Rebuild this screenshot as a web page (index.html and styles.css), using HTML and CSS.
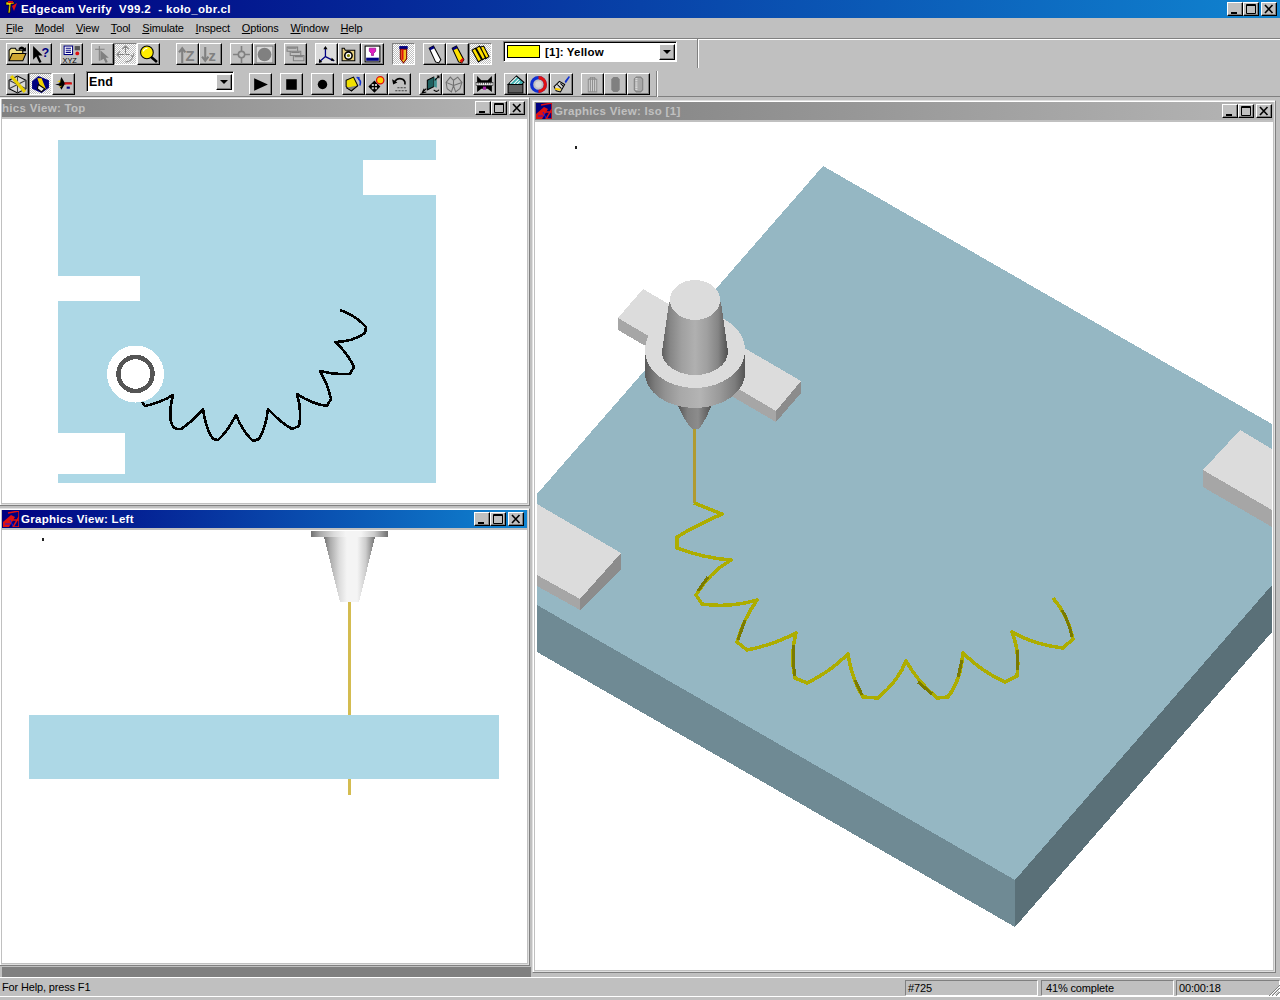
FILE: index.html
```html
<!DOCTYPE html>
<html lang="en">
<head>
<meta charset="utf-8">
<title>Edgecam Verify V99.2 - koło_obr.cl</title>
<link rel="stylesheet" href="styles.css">
</head>
<body>
<svg class="defs" width="0" height="0">
  <defs>
    <symbol id="g-min" viewBox="0 0 16 14"><rect x="4" y="10" width="6" height="2" fill="#000"/></symbol>
    <symbol id="g-max" viewBox="0 0 16 14"><path d="M3.500 2.500h9v9h-9z M3 3.500h10" fill="none" stroke="#000"/></symbol>
    <symbol id="g-close" viewBox="0 0 16 14"><path d="M4 3l7.500 8M11.500 3L4 11" fill="none" stroke="#000" stroke-width="1.600"/></symbol>
    <symbol id="g-mdi" viewBox="0 0 16 16"><rect width="16" height="16" fill="#000080"/><path d="M0 16L0 11 8 4 12 6 6 16z" fill="#e01010"/><path d="M5 2L16 0 16 6 10 16 16 16 16 9 9 9 3 12" fill="none" stroke="#e01010" stroke-width="1.500"/><path d="M2 13h5M7 9l3 6" stroke="#1a1ae0" fill="none"/></symbol>
    <linearGradient id="facet1" x1="0" x2="1" y1="0" y2="0">
      <stop offset="0" stop-color="#5a5a5a"/><stop offset=".1" stop-color="#7c7c7c"/><stop offset=".2" stop-color="#929292"/><stop offset=".35" stop-color="#a8a8a8"/><stop offset=".55" stop-color="#b4b4b4"/><stop offset=".75" stop-color="#999"/><stop offset=".9" stop-color="#7c7c7c"/><stop offset="1" stop-color="#555"/>
    </linearGradient>
    <linearGradient id="facet2" x1="0" x2="1" y1="0" y2="0">
      <stop offset="0" stop-color="#606060"/><stop offset=".12" stop-color="#858585"/><stop offset=".3" stop-color="#a0a0a0"/><stop offset=".5" stop-color="#b0b0b0"/><stop offset=".68" stop-color="#a0a0a0"/><stop offset=".85" stop-color="#858585"/><stop offset="1" stop-color="#505050"/>
    </linearGradient>
    <linearGradient id="facet3" x1="0" x2="1" y1="0" y2="0">
      <stop offset="0" stop-color="#707070"/><stop offset=".12" stop-color="#aaa"/><stop offset=".3" stop-color="#dcdcdc"/><stop offset=".45" stop-color="#f4f4f4"/><stop offset=".65" stop-color="#f4f4f4"/><stop offset=".82" stop-color="#ccc"/><stop offset="1" stop-color="#707070"/>
    </linearGradient>
    <linearGradient id="facet4" x1="0" x2="1" y1="0" y2="0">
      <stop offset="0" stop-color="#505050"/><stop offset=".3" stop-color="#808080"/><stop offset=".6" stop-color="#8c8c8c"/><stop offset="1" stop-color="#505050"/>
    </linearGradient>
  </defs>
</svg>

<header class="app-title">
  <svg class="app-icon" width="16" height="16" viewBox="0 0 16 16"><path d="M1 15h11l3-3H4z" fill="#000080"/><path d="M3 1h8v2H8l-1 9H5L6 4H3z" fill="#e8d000" stroke="#000" stroke-width=".6"/><path d="M5 0h5v2H5z" fill="#d01010"/><path d="M9 5l5-3-3 8z" fill="#e01010"/></svg>
  <span class="app-name">Edgecam Verify&nbsp; V99.2&nbsp; - koło_obr.cl</span>
  <div class="wc-set wc-app">
    <span class="wc"><svg><use href="#g-min"/></svg></span><span class="wc"><svg><use href="#g-max"/></svg></span><span class="wc wc-close"><svg><use href="#g-close"/></svg></span>
  </div>
</header>

<nav class="menu">
  <span class="m m-file"><u>F</u>ile</span>
  <span class="m"><u>M</u>odel</span>
  <span class="m"><u>V</u>iew</span>
  <span class="m"><u>T</u>ool</span>
  <span class="m"><u>S</u>imulate</span>
  <span class="m"><u>I</u>nspect</span>
  <span class="m"><u>O</u>ptions</span>
  <span class="m"><u>W</u>indow</span>
  <span class="m"><u>H</u>elp</span>
</nav>

<section class="toolbars">
  <div class="tbar tbar-1">
    <div class="grp">
      <button class="b"><svg viewBox="0 0 18 18"><path d="M1 15V5l2-2h4l1 2h6v3" fill="#f0e080" stroke="#000"/><path d="M1 15l3-7h13l-3 7z" fill="#d0a830" stroke="#000"/><path d="M10 3q3-3 6 0l1-1v4h-4l1.500-1q-2-2-4 0" fill="#000"/></svg></button>
      <button class="b"><svg viewBox="0 0 18 18"><path d="M2 1v13l3-3 3 6 2-1-3-6h4z" fill="#000"/><text class="ic-q" x="10" y="11">?</text></svg></button>
    </div>
    <div class="grp">
      <button class="b"><svg viewBox="0 0 18 18"><rect x="2" y="1" width="8" height="8" fill="#fff" stroke="#000080"/><path d="M3.500 3h5M3.500 5h5M3.500 7h5" stroke="#000080"/><rect x="12" y="1" width="5" height="4" fill="#555"/><circle cx="14.500" cy="8" r="1.800" fill="#e01010"/><text class="ic-xyz" x="0.500" y="17">XYZ</text></svg></button>
    </div>
    <div class="grp">
      <button class="b"><svg viewBox="0 0 18 18"><path d="M2 4h9M6 1v14" stroke="#808080"/><path d="M7 5v10l3-2 2 4 2-1-2-4h3z" fill="#808080"/></svg></button>
      <button class="b is-on"><svg viewBox="0 0 18 18"><path d="M9 1v7M6 4l3-3 3 3M1 9h7M4 6L1 9l3 3M9 16q5 0 7-5M14 10l2 1 1-3M9 9l4 0" fill="none" stroke="#808080"/></svg></button>
      <button class="b"><svg viewBox="0 0 18 18"><path d="M11 11l6 5" stroke="#000" stroke-width="2.500"/><circle cx="7.500" cy="7" r="6" fill="#ffee00" stroke="#000"/><path d="M4 6q1-3 4-3" stroke="#fff" fill="none"/></svg></button>
    </div>
    <div class="grp grp-wide">
      <button class="b"><svg viewBox="0 0 18 18"><path d="M4 17V4M1 7l3-4 3 4" fill="none" stroke="#808080" stroke-width="2"/><text class="ic-z" x="7" y="15">Z</text></svg></button>
      <button class="b"><svg viewBox="0 0 18 18"><path d="M4 2v13M1 11l3 4 3-4" fill="none" stroke="#808080" stroke-width="2"/><text class="ic-z" x="7" y="15">z</text></svg></button>
    </div>
    <div class="grp">
      <button class="b"><svg viewBox="0 0 18 18"><path d="M9 1v5M9 12v5M1 9h5M12 9h5" stroke="#808080" stroke-width="1.500"/><circle cx="9" cy="9" r="3" fill="none" stroke="#808080" stroke-width="1.500"/></svg></button>
      <button class="b"><svg viewBox="0 0 18 18"><rect x="1" y="1" width="16" height="16" fill="#d8d8d8" stroke="#808080"/><circle cx="9" cy="9" r="6.500" fill="#808080"/></svg></button>
    </div>
    <div class="grp">
      <button class="b"><svg viewBox="0 0 18 18"><path d="M1 2h10v4H1z M4 6h10v4H4z M7 10h10v5H7z" fill="#c0c0c0" stroke="#808080"/><path d="M2 3h8M5 7h8M8 11h8" stroke="#808080"/></svg></button>
    </div>
    <div class="grp">
      <button class="b is-soft"><svg viewBox="0 0 18 18"><path d="M8 11V2M8 11l8 4M8 11l-6 5" stroke="#000080" fill="none" stroke-width="1.200"/><path d="M6 4l2-3 2 3zM14 12l3 3-4 0zM2 13l0 4 3-1z" fill="#000"/></svg></button>
      <button class="b"><svg viewBox="0 0 18 18"><path d="M2 3h2l1 2h9v10H2z" fill="#e8d080" stroke="#000"/><circle cx="8" cy="10" r="3.500" fill="#fff" stroke="#000" stroke-width="1.500"/><circle cx="8" cy="10" r="1.500" fill="#808000"/></svg></button>
      <button class="b"><svg viewBox="0 0 18 18"><rect x="2" y="1" width="14" height="15" fill="#fff" stroke="#000"/><path d="M6 3h6v3l-2 2v2H8V8L6 6z" fill="#e020c0" stroke="#800080" stroke-width=".6"/><path d="M3 12h12v3H3z" fill="#000080"/></svg></button>
    </div>
    <div class="grp">
      <button class="b is-on"><svg viewBox="0 0 18 18"><rect x="5" y="1" width="8" height="3" fill="#000080"/><path d="M6 4h6v9l-3 4-3-4z" fill="#f0c020" stroke="#800000"/><path d="M8 4v10" stroke="#e01010" stroke-width="2"/></svg></button>
    </div>
    <div class="grp">
      <button class="b"><svg viewBox="0 0 18 18"><path d="M4 3l4-2 7 13-2 3-3-1z" fill="#fff" stroke="#000"/><path d="M4 3l4-2 1 2-4 2z" fill="#000080"/></svg></button>
      <button class="b"><svg viewBox="0 0 18 18"><path d="M4 3l4-2 7 13-2 3-3-1z" fill="#ffe000" stroke="#000"/><path d="M4 3l4-2 1 2-4 2z" fill="#000080"/><path d="M13 17l2-3-1-2-3 3z" fill="#e01010"/></svg></button>
      <button class="b is-on"><svg viewBox="0 0 18 18"><path d="M1 5l3-2 6 11-3 2zM5 3l3-2 6 11-3 2zM9 2l3-1 5 10-3 2z" fill="#ffe000" stroke="#000"/></svg></button>
    </div>
    <div class="combo combo-color">
      <span class="swatch"></span><span class="combo-text">[1]: Yellow</span>
      <span class="combo-arrow"></span>
    </div>
    <span class="tb-sep sep-1"></span>
  </div>

  <div class="tbar tbar-2">
    <div class="grp">
      <button class="b"><svg viewBox="0 0 18 18"><path d="M1 5l8-4 8 4v8l-8 4-8-4z" fill="#d8d8d8" stroke="#000"/><path d="M1 13L17 5M1 5l16 8M9 1v16" stroke="#404040" fill="none"/><path d="M3 1l13 15" stroke="#e8d000" stroke-width="3"/></svg></button>
      <button class="b is-on"><svg viewBox="0 0 18 18"><path d="M1 6l6-5 10 4v7l-7 5-9-4z" fill="#000080"/><path d="M6 3h4l4 10-4 2z" fill="#f0d000"/><path d="M7 9l6 4-3 3-4-3z" fill="#e8e8e8" stroke="#000"/></svg></button>
      <button class="b"><svg viewBox="0 0 18 18"><path d="M1 9l4-1 2-6 3 5h7l-7 2-3 5-2-4z" fill="#000"/><path d="M10 7h7v2h-7z" fill="#e01010"/><path d="M3 6l3-1v2zM4 12l3-1v-1z" fill="#f0d000"/><path d="M12 11h3v2h-3z" fill="#000080"/></svg></button>
    </div>
    <div class="combo combo-end"><span class="combo-text combo-text-end">End</span><span class="combo-arrow"></span></div>
    <div class="grp grp-after-combo">
      <button class="b"><svg viewBox="0 0 18 18"><path d="M3 3l13 6-13 6z" fill="#000"/></svg></button>
    </div>
    <div class="grp">
      <button class="b"><svg viewBox="0 0 18 18"><rect x="4" y="4" width="10" height="10" fill="#000"/></svg></button>
    </div>
    <div class="grp">
      <button class="b"><svg viewBox="0 0 18 18"><circle cx="9" cy="9" r="4.500" fill="#000"/></svg></button>
    </div>
    <div class="grp">
      <button class="b"><svg viewBox="0 0 18 18"><path d="M2 5l7-3 4 8-6 5-5-4z" fill="#f0e000" stroke="#000"/><path d="M2 12l5 3 6-5" fill="#808080" stroke="#000"/><path d="M12 2q5 3 3 8M14 2v3" stroke="#1030d0" fill="none" stroke-width="1.500"/></svg></button>
      <button class="b"><svg viewBox="0 0 18 18"><path d="M7 6v10M2 11h10M7 6L5 8h4zM7 16l-2-2h4zM2 11l2-2v4zM12 11l-2-2v4z" fill="#000" stroke="#000"/><circle cx="12.500" cy="5" r="3.500" fill="#ffd000" stroke="#e01010" stroke-width="1.200"/></svg></button>
      <button class="b"><svg viewBox="0 0 18 18"><path d="M4 7q3-5 8-3 3 2 2 5" fill="none" stroke="#000" stroke-width="1.500"/><path d="M2 4l1 5 4-2z" fill="#000"/><path d="M7 12h9M5 15h11" stroke="#404040" stroke-dasharray="2 1"/></svg></button>
    </div>
    <div class="grp">
      <button class="b"><svg viewBox="0 0 18 18"><path d="M6 5l6-3v9l-6 3z" fill="#206060" stroke="#000"/><path d="M12 2l3 2v8l-3-1z" fill="#409090"/><path d="M1 17l4-4M17 1l-4 4M3 13l-2 4 4-1M15 1l2 0 0 2" stroke="#000" fill="none"/><path d="M12 14q3 3 5 0" stroke="#000" fill="none"/></svg></button>
      <button class="b"><svg viewBox="0 0 18 18"><path d="M2 7l4-5 3 3 4-3 4 5-2 6-4 3-2-6-2 6-4-3z" fill="none" stroke="#707070"/><path d="M9 5v5M2 7l7 3 8-3" stroke="#707070" fill="none"/></svg></button>
    </div>
    <div class="grp">
      <button class="b"><svg viewBox="0 0 18 18"><path d="M2 1l4 4h6l4-4v15l-4-3h-6l-4 3z" fill="#000"/><rect x="1" y="7" width="16" height="3" fill="#f0f0f0" stroke="#000" stroke-width=".5"/><path d="M3 7v2M5 7v2M7 7v2M9 7v2M11 7v2M13 7v2M15 7v2" stroke="#000" stroke-width=".6"/><rect x="7.500" y="11" width="3" height="3" fill="#a020a0"/></svg></button>
    </div>
    <div class="grp">
      <button class="b"><svg viewBox="0 0 18 18"><path d="M2 9l8-8 7 6-2 2z" fill="#40b0b0" stroke="#000"/><path d="M4 8l6-6M7 9l5-5M10 9l3-3" stroke="#fff"/><path d="M2 9h14v8H2z" fill="#606060" stroke="#000"/></svg></button>
      <button class="b"><svg viewBox="0 0 18 18"><circle cx="9" cy="9" r="6.500" fill="none" stroke="#1030d0" stroke-width="3"/><path d="M9 2.500a6.500 6.500 0 0 1 0 13" fill="none" stroke="#e01010" stroke-width="3"/><circle cx="9" cy="9" r="3" fill="#d8d8d8"/></svg></button>
      <button class="b"><svg viewBox="0 0 18 18"><path d="M12 6l4-5 1 1-4 6" fill="#1030d0"/><path d="M2 11l5-5 5 3-4 7-4-1z" fill="#d8d8d8" stroke="#000"/><path d="M3 13l5 1" stroke="#ffd000" stroke-width="2"/><path d="M5 9l4 4M8 8l3 3" stroke="#000"/></svg></button>
    </div>
    <div class="grp">
      <button class="b"><svg viewBox="0 0 18 18"><path d="M5 4h8v12H5z" fill="#d0d0d0" stroke="#909090"/><path d="M7 2v14M9 2v14M11 2v14" stroke="#909090"/><path d="M6 4q3-3 6 0" fill="none" stroke="#909090"/></svg></button>
      <button class="b"><svg viewBox="0 0 18 18"><path d="M5 4l2-2h4l2 2v10l-2 2H7l-2-2z" fill="#808080"/></svg></button>
      <button class="b"><svg viewBox="0 0 18 18"><path d="M5 4l2-2h4l2 2v10l-2 2H7l-2-2z" fill="#a8a8a8" stroke="#808080"/><path d="M7 3v12" stroke="#e8e8e8" stroke-dasharray="1 1" stroke-width="2"/></svg></button>
    </div>
    <span class="tb-sep sep-2"></span>
  </div>
</section>

<main class="mdi">
  <article class="win win-top">
    <div class="cap cap-off">
      <span class="cap-text">hics View: Top</span>
      <div class="wc-set"><span class="wc"><svg><use href="#g-min"/></svg></span><span class="wc"><svg><use href="#g-max"/></svg></span><span class="wc wc-close"><svg><use href="#g-close"/></svg></span></div>
    </div>
    <div class="view">
      <svg class="scene" viewBox="2 119 525 384">
        <rect x="58" y="140" width="378" height="343" fill="#add8e6"/>
        <rect x="363" y="160" width="73" height="35" fill="#fff"/>
        <rect x="58" y="276" width="82" height="25" fill="#fff"/>
        <rect x="58" y="433" width="67" height="41" fill="#fff"/>
        <circle cx="135.500" cy="374" r="28.500" fill="#fff"/>
        <circle cx="135.500" cy="374" r="17" fill="none" stroke="#555" stroke-width="4.500"/>
        <path class="trace" d="M142 402L145 406Q160 403 173 395Q168 415 172 425Q175 430 181 429Q193 421 203 409Q206 430 213 439L218 440Q228 431 236 415Q243 432 253 441L259 439Q266 427 268 409Q280 422 292 429L299 426Q302 410 297 394Q312 404 327 406L331 399Q328 385 320 371Q335 375 350 374L354 367Q347 352 335 342Q352 342 365 333L366 327Q355 315 340 310"/>
      </svg>
    </div>
  </article>

  <article class="win win-left">
    <div class="cap cap-on cap-left">
      <svg class="cap-icon"><use href="#g-mdi"/></svg>
      <span class="cap-text">Graphics View: Left</span>
      <div class="wc-set"><span class="wc"><svg><use href="#g-min"/></svg></span><span class="wc"><svg><use href="#g-max"/></svg></span><span class="wc wc-close"><svg><use href="#g-close"/></svg></span></div>
    </div>
    <div class="view">
      <svg class="scene" viewBox="2 530 525 433">
        <rect x="42" y="538" width="2" height="3" fill="#222"/>
        <rect x="311" y="531" width="77" height="6" fill="url(#facet3)"/>
        <path d="M324 537H375L359 602H340z" fill="url(#facet3)"/>
        <rect x="348" y="602" width="3" height="193" fill="#d4bc50"/>
        <rect x="29" y="715" width="470" height="64" fill="#add8e6"/>
      </svg>
    </div>
  </article>

  <article class="win win-iso">
    <div class="cap cap-off cap-iso">
      <svg class="cap-icon"><use href="#g-mdi"/></svg>
      <span class="cap-text">Graphics View: Iso [1]</span>
      <div class="wc-set"><span class="wc"><svg><use href="#g-min"/></svg></span><span class="wc"><svg><use href="#g-max"/></svg></span><span class="wc wc-close"><svg><use href="#g-close"/></svg></span></div>
    </div>
    <div class="view">
      <svg class="scene" viewBox="535 122 738 848">
        <rect x="575" y="146" width="2" height="3" fill="#222"/>
        <path d="M537 605L1015 880V927L537 652z" fill="#6f8a94"/>
        <path d="M1015 880L1272 585V632L1015 927z" fill="#5a7078"/>
        <path d="M823 166L1272 424V585L1015 880 537 605V494z" fill="#95b7c3"/>
        <path d="M537 504L621 553 580 599 537 575z" fill="#dcdcdc"/>
        <path d="M621 553V569L580 610V599z" fill="#8c8c8c"/>
        <path d="M537 575L580 599V610L537 586z" fill="#a6a6a6"/>
        <path d="M1203 470L1240 430 1272 449V510z" fill="#dcdcdc"/>
        <path d="M1203 470V487L1272 527V510z" fill="#a6a6a6"/>
        <path d="M618 318L643 289 801 381 776 411z" fill="#dcdcdc"/>
        <path d="M618 318V330L776 422V411z" fill="#a6a6a6"/>
        <path d="M776 411V422L801 393V381z" fill="#8c8c8c"/>
        <path d="M677 404H712Q706 420 699 429H692Q684 420 677 404z" fill="url(#facet4)"/>
        <path d="M645 350V373A50 35 0 0 0 745 373V350z" fill="url(#facet1)"/>
        <ellipse cx="695" cy="350" rx="50" ry="38" fill="#dcdcdc"/>
        <path d="M669 302H721L728 352A33 23 0 0 1 662 352z" fill="url(#facet2)"/>
        <ellipse cx="695" cy="300" rx="25" ry="20" fill="#dcdcdc"/>
        <path class="stem" d="M694 429V503"/>
        <path class="wire" d="M694 503L722 514Q695 526 677 537L677 548Q703 558 731 560Q710 572 696 595L702 604Q730 608 757 600Q743 620 737 642L747 650Q773 645 796 633Q790 655 795 678L807 683Q830 672 848 654Q852 680 863 697L878 698Q899 680 906 661Q918 682 937 698L948 697Q961 680 963 653Q982 672 1005 682L1017 676Q1020 652 1012 632Q1035 645 1063 648L1073 639Q1068 615 1053 598"/>
        <path class="wire-dark" d="M745 620L738 640M794 645Q792 660 795 676M855 680L862 695M958 677L962 660M1018 670L1017 650M1072 637Q1069 622 1062 610M708 577L698 591M918 682L932 694"/>
      </svg>
    </div>
  </article>

  <div class="dockbar"></div>
</main>

<footer class="status">
  <span class="st-msg">For Help, press F1</span>
  <span class="st-cell st-a">#725</span>
  <span class="st-cell st-b">41% complete</span>
  <span class="st-cell st-c">00:00:18</span>
  <svg class="grip" width="12" height="12" viewBox="0 0 12 12"><path d="M12 1L1 12M12 4L4 12M12 8L8 12" stroke="#808080" fill="none"/><path d="M12 2L2 12M12 5L5 12M12 9L9 12" stroke="#fff" fill="none"/></svg>
</footer>
</body>
</html>
```

FILE: styles.css
```css
* { box-sizing: border-box; }
html, body { margin: 0; padding: 0; }
body {
  width: 1280px;
  height: 1000px;
  overflow: hidden;
  display: flex;
  flex-direction: column;
  background: #c0c0c0;
  font-family: "Liberation Sans", Arial, sans-serif;
  font-size: 11px;
  letter-spacing: -.15px;
  color: #000;
}
.defs { position: absolute; }

.app-title {
  height: 18px;
  flex: none;
  display: flex;
  align-items: center;
  padding-left: 3px;
  background: linear-gradient(90deg, #000080, #1084d0);
  color: #fff;
  position: relative;
}
.app-icon { flex: none; margin-right: 2px; }
.app-name { font-weight: 700; font-size: 11.500px; letter-spacing: .38px; white-space: nowrap; }

.wc-set { margin-left: auto; display: flex; flex: none; }
.wc-app { margin-right: 3px; }
.wc {
  width: 16px;
  height: 14px;
  display: block;
  background: #c0c0c0;
  border: 1px solid;
  border-color: #fff #000 #000 #fff;
  box-shadow: inset -1px -1px #808080;
  position: relative;
}
.wc svg { position: absolute; left: -1px; top: -1px; width: 16px; height: 14px; }
.wc-close { margin-left: 2px; }

.menu {
  height: 20px;
  flex: none;
  display: flex;
  align-items: center;
  padding-left: 6px;
  gap: 11.800px;
  white-space: nowrap;
}
.m { display: block; }

.toolbars {
  flex: none;
  height: 59px;
  border-top: 1px solid #808080;
  box-shadow: inset 0 1px #fff;
  border-bottom: 1px solid #808080;
  padding-top: 4px;
}
.tbar { display: flex; align-items: flex-start; padding-left: 6px; position: relative; }
.tbar-1 { height: 29px; gap: 8px; }
.tbar-2 { height: 24px; gap: 8px; padding-top: 1px; }
.grp { display: flex; flex: none; }
.grp-wide { margin-left: 8px; }
.grp-after-combo { margin-left: 7px; }
.b {
  width: 23px;
  height: 22px;
  padding: 0;
  margin: 0;
  display: flex;
  align-items: center;
  justify-content: center;
  background: #c0c0c0;
  border: 1px solid;
  border-color: #fff #000 #000 #fff;
  box-shadow: inset -1px -1px #808080;
}
.b svg { width: 19px; height: 19px; display: block; }
.is-on {
  border-color: #808080 #fff #fff #808080;
  box-shadow: none;
  background: repeating-conic-gradient(#fff 0 25%, #c0c0c0 0 50%) 0 0 / 2px 2px;
}
.is-soft { background: #dcdcdc; }
.ic-q { font: 700 12px "Liberation Sans", sans-serif; fill: #000080; }
.ic-xyz { font: 400 7px "Liberation Sans", sans-serif; fill: #000; }
.ic-z { font: 700 14px "Liberation Sans", sans-serif; fill: #808080; }

.combo {
  flex: none;
  display: flex;
  align-items: center;
  background: #fff;
  border: 1px solid;
  border-color: #808080 #fff #fff #808080;
  box-shadow: inset 1px 1px #000;
  font-weight: 700;
  position: relative;
}
.combo-color { width: 174px; height: 21px; margin: -2px 0 0 3px; padding-left: 3px; }
.combo-end { width: 148px; height: 21px; margin: -2px 0 0 3px; padding-left: 2px; }
.swatch { width: 33px; height: 13px; background: #ffff00; border: 1px solid #000; margin-right: 5px; flex: none; }
.combo-text { font-size: 11.500px; white-space: nowrap; letter-spacing: .2px; }
.combo-text-end { font-size: 12.500px; }
.combo-arrow {
  position: absolute;
  right: 1px;
  top: 2px;
  width: 16px;
  height: 16px;
  background: #c0c0c0;
  border: 1px solid;
  border-color: #fff #000 #000 #fff;
  box-shadow: inset -1px -1px #808080;
}
.combo-arrow::after {
  content: "";
  position: absolute;
  left: 3px;
  top: 5px;
  border: 4px solid transparent;
  border-top: 4px solid #000;
  border-bottom: 0;
}
.tb-sep { position: absolute; top: -4px; height: 29px; width: 2px; border-left: 1px solid #808080; border-right: 1px solid #fff; }
.sep-1 { left: 697px; }
.sep-2 { left: 656px; top: -1px; }

.mdi { flex: 1; position: relative; background: #c0c0c0; }
.win {
  position: absolute;
  display: flex;
  flex-direction: column;
  background: #c0c0c0;
  border: 1px solid;
  border-color: #dfdfdf #808080 #808080 #dfdfdf;
  box-shadow: inset 1px 1px #fff, inset -1px -1px #dfdfdf;
  padding: 1px 2px 2px;
}
.win-top { left: -1px; top: 0; width: 531px; height: 409px; }
.win-left { left: -1px; top: 411px; width: 531px; height: 458px; }
.win-iso { left: 532px; top: 3px; width: 744px; height: 873px; }

.cap {
  flex: none;
  height: 18px;
  display: flex;
  align-items: center;
  padding-right: 2px;
  font-weight: 700;
  font-size: 11.500px;
  letter-spacing: .3px;
  white-space: nowrap;
  margin-bottom: 2px;
}
.cap-left { padding-right: 3px; }
.cap-iso { padding-right: 1px; }
.cap-on { background: linear-gradient(90deg, #000080, #1084d0); color: #fff; }
.cap-off { background: linear-gradient(90deg, #808080, #b5b5b5); color: #c0c0c0; }
.cap-icon { width: 16px; height: 16px; margin: 0 2px 0 1px; flex: none; }

.view { flex: 1; min-height: 0; background: #fff; display: flex; }
.scene { width: 100%; height: 100%; display: block; shape-rendering: crispEdges; }
.trace { fill: none; stroke: #000; stroke-width: 2.600; stroke-linejoin: round; }
.stem { fill: none; stroke: #b09a30; stroke-width: 3; }
.wire { fill: none; stroke: #adad00; stroke-width: 3.500; stroke-linejoin: round; }
.wire-dark { fill: none; stroke: #7a7a00; stroke-width: 3; }

.dockbar { position: absolute; left: 2px; bottom: 0; width: 529px; height: 10px; background: #808080; }

.status {
  flex: none;
  height: 23px;
  border-top: 1px solid #fff;
  position: relative;
  display: flex;
  align-items: flex-start;
  padding: 2px 0 0 2px;
  box-shadow: inset 0 -3px #c0c0c0, inset 0 -4px #fff;
}
.st-msg { flex: 1; line-height: 15px; }
.st-cell {
  flex: none;
  height: 16px;
  line-height: 14px;
  padding-left: 2px;
  border: 1px solid;
  border-color: #808080 #fff #fff #808080;
}
.st-a { width: 133px; margin-right: 3px; }
.st-b { width: 133px; margin-right: 2px; padding-left: 4px; }
.st-c { width: 104px; }
.grip { position: absolute; right: 0; top: 6px; }
```
